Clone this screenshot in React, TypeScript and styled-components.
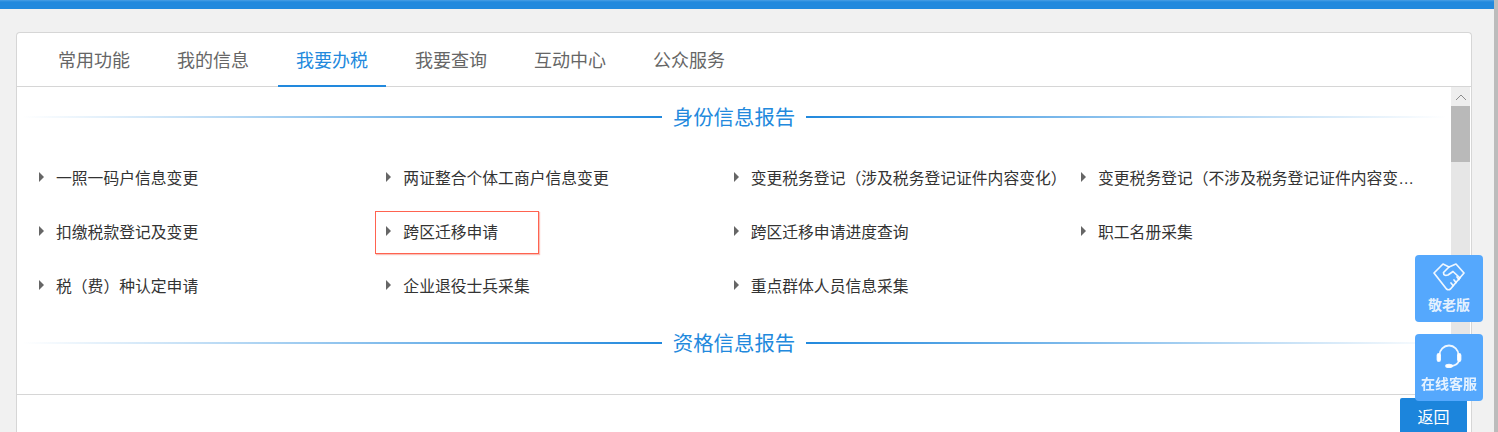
import React from "react";
import styled, { createGlobalStyle } from "styled-components";

const tabs = ["常用功能", "我的信息", "我要办税", "我要查询", "互动中心", "公众服务"];

const identityItems = [
  "一照一码户信息变更",
  "两证整合个体工商户信息变更",
  "变更税务登记（涉及税务登记证件内容变化）",
  "变更税务登记（不涉及税务登记证件内容变化）",
  "扣缴税款登记及变更",
  "跨区迁移申请",
  "跨区迁移申请进度查询",
  "职工名册采集",
  "税（费）种认定申请",
  "企业退役士兵采集",
  "重点群体人员信息采集",
];

function App() {
  return (
    <>
      <GlobalStyle />
      <Frame>
        <Main>
          <TopBar />
          <Page>
            <Panel>
              <TabBar>
                {tabs.map((tab, index) => (
                  <Tab key={tab} $active={index === 2}>
                    {tab}
                  </Tab>
                ))}
              </TabBar>
              <ScrollArea>
                <Content>
                  <SectionTitle title="身份信息报告" />
                  <ItemGrid>
                    {identityItems.map((item) => (
                      <Item key={item} $marked={item === "跨区迁移申请"}>
                        <Arrow />
                        <ItemText>{item}</ItemText>
                      </Item>
                    ))}
                  </ItemGrid>
                  <SectionTitle title="资格信息报告" />
                </Content>
                <ScrollTrack>
                  <ScrollUp>
                    <svg width="12" height="8" viewBox="0 0 12 8">
                      <path d="M1 7 L6 2 L11 7" fill="none" stroke="#8c8c8c" strokeWidth="1" />
                    </svg>
                  </ScrollUp>
                  <ScrollThumb />
                </ScrollTrack>
              </ScrollArea>
              <Footer>
                <BackButton>返回</BackButton>
              </Footer>
            </Panel>
          </Page>
        </Main>
        <WindowEdge />
      </Frame>
      <FloatBox $top={255}>
        <IconSlot>
          <svg width="32" height="28" viewBox="0 0 32 28" fill="none" stroke="#fff" strokeOpacity="0.9" strokeWidth="1.7" strokeLinejoin="round" strokeLinecap="round">
            <path d="M10 1 L1 10 L13.5 26 Q15.5 27.5 17.5 26 L31 10 L23 1 L16 4 L10 1 Z" />
            <path d="M16 4 L10.5 9.5 Q10.5 13.5 15 12 L20 8.5 L27 15" />
            <path d="M20 22.5 L18 20 M23 19.5 L21 17 M26 16.5 L24 14" />
          </svg>
        </IconSlot>
        <FloatLabel>敬老版</FloatLabel>
      </FloatBox>
      <FloatBox $top={334}>
        <IconSlot>
          <svg width="26" height="24" viewBox="0 0 26 24" fill="none" stroke="#fff" strokeOpacity="0.9" strokeWidth="1.8" strokeLinecap="round">
            <path d="M3.5 11 A9.5 9.5 0 0 1 22.5 11" />
            <path d="M23 17 Q21.5 21 16 22" />
            <ellipse cx="13" cy="22" rx="3" ry="1.3" fill="#fff" />
            <rect x="1.5" y="10" width="2.6" height="7" rx="1.3" fill="#fff" />
            <rect x="21.9" y="10" width="2.6" height="7" rx="1.3" fill="#fff" />
          </svg>
        </IconSlot>
        <FloatLabel>在线客服</FloatLabel>
      </FloatBox>
    </>
  );
}

export default App;

const SectionTitle = ({ title }: { title: string }) => (
  <TitleRow>
    <TitleLine $side="left" />
    <TitleText>{title}</TitleText>
    <TitleLine $side="right" />
  </TitleRow>
);

const GlobalStyle = createGlobalStyle`
  html, body {
    margin: 0;
    height: 432px;
    overflow: hidden;
    background: #f1f1f1;
    font-family: "Noto Sans CJK SC", "Liberation Sans", sans-serif;
  }
`;

const Frame = styled.div`
  display: flex;
  height: 432px;
  overflow: hidden;
`;

const Main = styled.div`
  flex: 1;
  min-width: 0;
`;

const WindowEdge = styled.div`
  flex: none;
  width: 4px;
  background: #bcbcbc;
`;

const TopBar = styled.div`
  height: 9px;
  background: linear-gradient(180deg, #4a9fe4 0, #2289dd 2px);
`;

const Page = styled.main`
  padding: 23px 22px 0 16px;
`;

const Panel = styled.section`
  height: 400px;
  box-sizing: border-box;
  background: #fff;
  border: 1px solid #d6d6d6;
  border-bottom: 0;
  border-radius: 4px 4px 0 0;
`;

const TabBar = styled.nav`
  display: flex;
  gap: 11px;
  height: 53px;
  padding-left: 23px;
  border-bottom: 1px solid #d6d6d6;
`;

const Tab = styled.div<{ $active?: boolean }>`
  width: 108px;
  height: 54px;
  box-sizing: border-box;
  text-align: center;
  font-size: 18px;
  line-height: 53px;
  color: ${(p) => (p.$active ? "#2289dd" : "#666")};
  border-bottom: 2px solid ${(p) => (p.$active ? "#2289dd" : "transparent")};
`;

const ScrollArea = styled.div`
  display: flex;
  height: 307px;
  overflow: hidden;
`;

const Content = styled.div`
  flex: 1;
  min-width: 0;
`;

const TitleRow = styled.div`
  display: flex;
  align-items: center;
  height: 60px;
  padding: 0 5px 1px;
  box-sizing: border-box;
`;

const TitleLine = styled.div<{ $side: "left" | "right" }>`
  flex: 1;
  height: 2px;
  background: linear-gradient(
    ${(p) => (p.$side === "left" ? "to left" : "to right")},
    #2289dd,
    #ffffff
  );
`;

const TitleText = styled.h2`
  margin: 0;
  padding: 0 11px 2px;
  font-size: 20.4px;
  font-weight: 400;
  line-height: 58px;
  color: #2289dd;
`;

const ItemGrid = styled.div`
  display: grid;
  grid-template-columns: repeat(4, 347.33px);
  grid-auto-rows: 54px;
  padding: 3px 0 0 22px;
  height: 163px;
`;

const Item = styled.div<{ $marked?: boolean }>`
  position: relative;
  display: flex;
  align-items: center;
  min-width: 0;
  padding-right: 13px;
  font-family: "Liberation Sans", "Noto Sans CJK SC", sans-serif;
  font-size: 15.8px;
  color: #333;

  ${(p) =>
    p.$marked &&
    `
    &::after {
      content: "";
      position: absolute;
      left: -11px;
      top: 7px;
      width: 164px;
      height: 43px;
      box-sizing: border-box;
      border: 1px solid #ff6350;
      box-shadow: 1px 1px 1px rgba(240, 100, 80, 0.4);
    }
  `}
`;

const Arrow = styled.span`
  flex: none;
  width: 0;
  height: 0;
  margin-right: 12px;
  border-left: 5px solid #666;
  border-top: 5px solid transparent;
  border-bottom: 5px solid transparent;
`;

const ItemText = styled.span`
  min-width: 0;
  overflow: hidden;
  white-space: nowrap;
  text-overflow: ellipsis;
`;

const ScrollTrack = styled.div`
  flex: none;
  width: 19px;
  margin-right: 1px;
  background: #e6e6e6;
`;

const ScrollUp = styled.div`
  display: flex;
  align-items: center;
  justify-content: center;
  height: 19px;
  background: #eeeeee;
`;

const ScrollThumb = styled.div`
  height: 56px;
  background: #b9b9b9;
`;

const Footer = styled.footer`
  display: flex;
  justify-content: flex-end;
  padding: 3px 4px 0 0;
  border-top: 1px solid #d6d6d6;
`;

const BackButton = styled.button`
  width: 67px;
  height: 34px;
  padding: 2px 0 0;
  border: 0;
  border-radius: 2px 2px 0 0;
  background: #1c85dc;
  color: #fff;
  font-family: inherit;
  font-size: 16px;
`;

const FloatBox = styled.aside<{ $top: number }>`
  position: fixed;
  left: 1415px;
  top: ${(p) => p.$top}px;
  display: flex;
  flex-direction: column;
  align-items: center;
  width: 68px;
  height: 67px;
  padding-top: 8px;
  box-sizing: border-box;
  border-radius: 4px;
  background: #55a8fd;
`;

const IconSlot = styled.div`
  display: flex;
  align-items: center;
  justify-content: center;
  height: 28px;
`;

const FloatLabel = styled.span`
  margin-top: 3px;
  font-size: 14px;
  font-weight: 700;
  line-height: 20px;
  white-space: nowrap;
  color: rgba(255, 255, 255, 0.85);
`;
